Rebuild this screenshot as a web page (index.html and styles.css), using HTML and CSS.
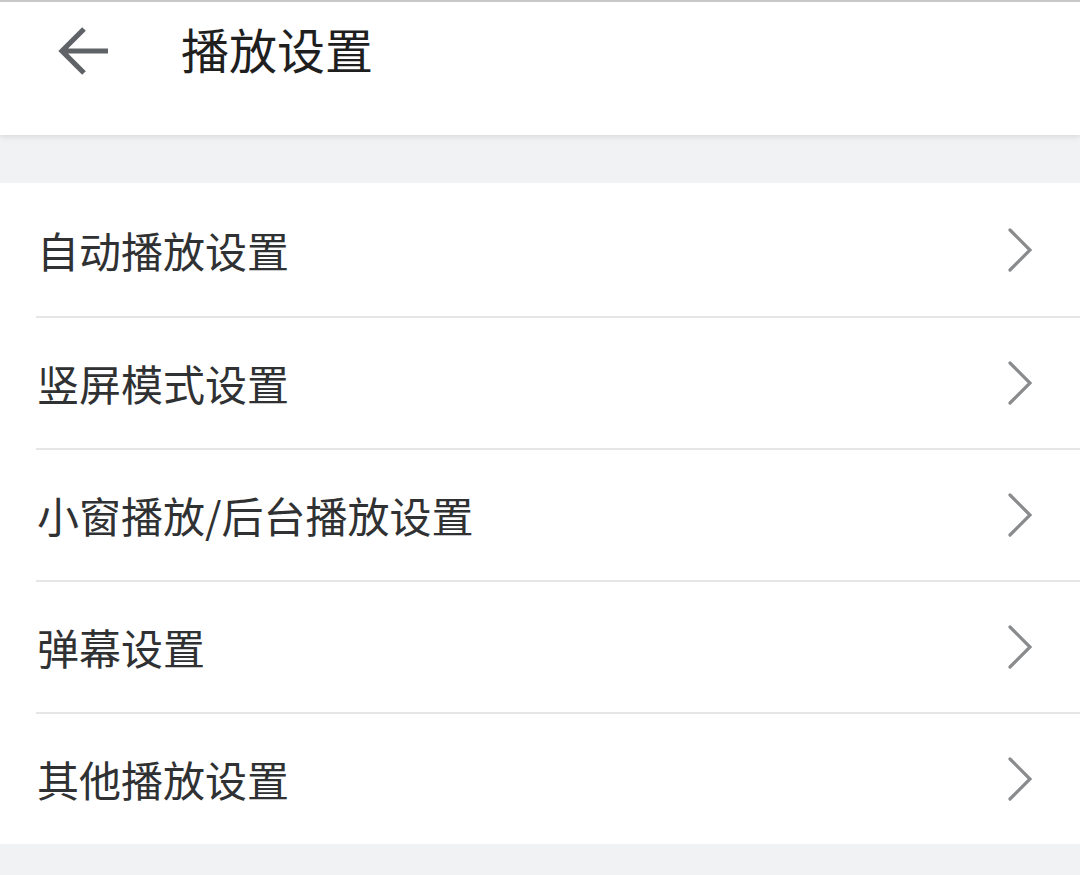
FILE: index.html
```html
<!DOCTYPE html>
<html lang="zh">
<head>
<meta charset="utf-8">
<link rel="stylesheet" href="styles.css">
</head>
<body>
<div class="page">
  <header class="topbar">
    <svg class="back" width="60" height="60" viewBox="0 0 60 60">
      <path d="M56 27 H10 M32 5 L10 27 L32 49" fill="none" stroke="#5f6266" stroke-width="5.2" stroke-linejoin="miter" stroke-linecap="butt"/>
    </svg>
    <h1 class="title">播放设置</h1>
  </header>
  <div class="gap"></div>
  <ul class="list">
    <li class="row"><span class="label">自动播放设置</span><svg class="chev" width="30" height="50" viewBox="0 0 30 50"><path d="M5 5 L25 25 L5 45" fill="none" stroke="#8a8b8d" stroke-width="3.2" stroke-linecap="round" stroke-linejoin="miter"/></svg></li>
    <li class="row"><span class="label">竖屏模式设置</span><svg class="chev" width="30" height="50" viewBox="0 0 30 50"><path d="M5 5 L25 25 L5 45" fill="none" stroke="#8a8b8d" stroke-width="3.2" stroke-linecap="round" stroke-linejoin="miter"/></svg></li>
    <li class="row"><span class="label">小窗播放/后台播放设置</span><svg class="chev" width="30" height="50" viewBox="0 0 30 50"><path d="M5 5 L25 25 L5 45" fill="none" stroke="#8a8b8d" stroke-width="3.2" stroke-linecap="round" stroke-linejoin="miter"/></svg></li>
    <li class="row"><span class="label">弹幕设置</span><svg class="chev" width="30" height="50" viewBox="0 0 30 50"><path d="M5 5 L25 25 L5 45" fill="none" stroke="#8a8b8d" stroke-width="3.2" stroke-linecap="round" stroke-linejoin="miter"/></svg></li>
    <li class="row"><span class="label">其他播放设置</span><svg class="chev" width="30" height="50" viewBox="0 0 30 50"><path d="M5 5 L25 25 L5 45" fill="none" stroke="#8a8b8d" stroke-width="3.2" stroke-linecap="round" stroke-linejoin="miter"/></svg></li>
  </ul>
</div>
</body>
</html>
```
FILE: styles.css
```css
* { box-sizing: border-box; }
html, body {
  margin: 0;
  padding: 0;
  background: #f1f2f4;
  font-family: "Noto Sans CJK SC", "Noto Sans", sans-serif;
}
.page {
  width: 1080px;
  height: 875px;
  overflow: hidden;
  background: #f1f2f4;
}
.topbar {
  height: 135px;
  background: #fff;
  border-top: 2px solid #c8c8c8;
  display: flex;
  align-items: flex-start;
  padding-top: 22px;
  padding-left: 52px;
  box-shadow: 0 2px 6px rgba(0,0,0,0.10);
  position: relative;
  z-index: 1;
}
.back {
  display: block;
  flex: none;
}
.title {
  margin: -6px 0 0 69px;
  font-size: 48px;
  font-weight: 400;
  color: #1f1f1f;
  line-height: 60px;
}
.gap {
  height: 48px;
}
.list {
  list-style: none;
  margin: 0;
  padding: 0 0 0 36px;
  background: #fff;
}
.row {
  height: 132px;
  display: flex;
  align-items: center;
  justify-content: space-between;
  border-top: 2px solid #e6e6e6;
  padding-left: 1px;
  padding-right: 45px;
}
.row:first-child {
  border-top: none;
  height: 133px;
}
.label {
  font-size: 42px;
  color: #303133;
  line-height: 1;
}
.chev {
  display: block;
  flex: none;
}
```
